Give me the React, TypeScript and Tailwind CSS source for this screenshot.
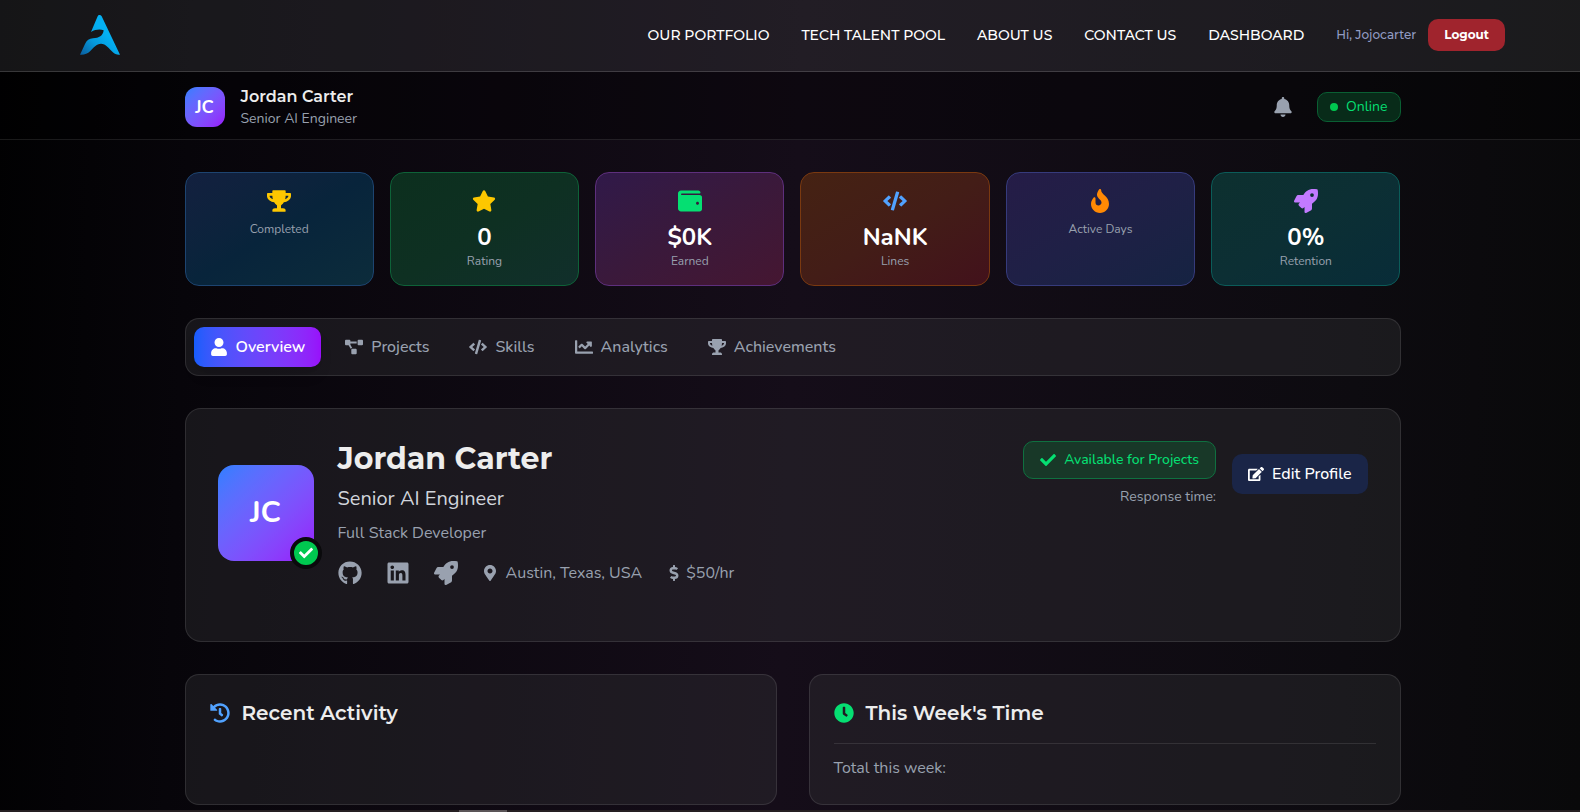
import type { ReactNode } from "react";
import type { IconType } from "react-icons";
import {
  FaBell,
  FaChartLine,
  FaCheck,
  FaClock,
  FaCode,
  FaDollarSign,
  FaEdit,
  FaFire,
  FaGithub,
  FaHistory,
  FaLinkedin,
  FaMapMarkerAlt,
  FaProjectDiagram,
  FaRocket,
  FaStar,
  FaTrophy,
  FaUser,
  FaWallet,
} from "react-icons/fa";

const heading = "font-[Montserrat,Inter,sans-serif]";

const navLinks = ["OUR PORTFOLIO", "TECH TALENT POOL", "ABOUT US", "CONTACT US", "DASHBOARD"];

type Stat = { label: string; value?: string; icon: IconType; color: string; box: string };

const stats: Stat[] = [
  { label: "Completed", icon: FaTrophy, color: "text-[#fdc700]", box: "from-[#13203f] via-[#08243b] to-[#0c2c3b] border-[#1d4470]" },
  { label: "Rating", value: "0", icon: FaStar, color: "text-[#fdc700]", box: "from-[#0c2f1e] via-[#0e3022] to-[#112f2b] border-[#0e6238]" },
  { label: "Earned", value: "$0K", icon: FaWallet, color: "text-[#05df72]", box: "from-[#301949] via-[#3a193b] to-[#451631] border-[#5e2f7d]" },
  { label: "Lines", value: "NaNK", icon: FaCode, color: "text-[#51a2ff]", box: "from-[#452213] via-[#431d17] to-[#42111b] border-[#7a3910]" },
  { label: "Active Days", icon: FaFire, color: "text-[#ff8904]", box: "from-[#251c47] via-[#1f2046] to-[#152342] border-[#363b7c]" },
  { label: "Retention", value: "0%", icon: FaRocket, color: "text-[#c27aff]", box: "from-[#0d302f] via-[#0c2f34] to-[#082c38] border-[#0b5c59]" },
];

type Tab = { label: string; icon: IconType };

const tabs: Tab[] = [
  { label: "Overview", icon: FaUser },
  { label: "Projects", icon: FaProjectDiagram },
  { label: "Skills", icon: FaCode },
  { label: "Analytics", icon: FaChartLine },
  { label: "Achievements", icon: FaTrophy },
];

function Logo() {
  return (
    <svg viewBox="0 0 120 120" className="size-10" role="img" aria-label="Home">
      <defs>
        <linearGradient id="logo-fill" x1="0" y1="1" x2="0.6" y2="0.4">
          <stop offset="0" stopColor="#0a5c9c" />
          <stop offset="0.55" stopColor="#0599dc" />
          <stop offset="1" stopColor="#04b0f2" />
        </linearGradient>
      </defs>
      <path
        fill="url(#logo-fill)"
        d="M53 4C55-1 62-1 65 4L120 119C111 120 104 117 98 111C88 101 77 86 63 86C49 86 41 98 31 108C22 117 12 120 0 119L15 87C20 76 28 71 39 70C57 69 69 63 71 46C61 42 46 43 33 51Z"
      />
    </svg>
  );
}

function Panel({ className, children }: { className: string; children?: ReactNode }) {
  return <section className={`border border-white/10 bg-[#37363a]/35 ${className}`}>{children}</section>;
}

export default function App() {
  return (
    <div className="min-h-[100vh] overflow-hidden bg-[linear-gradient(92deg,#010102_0%,#07050a_12%,#150d19_50%,#0d0b10_85%,#09090a_100%)] font-[Nunito,Lato,sans-serif] text-white">
      <header className="flex h-[72px] items-center justify-between border-b border-white/15 bg-[#37363a]/38 pr-[75px] pb-px pl-20">
        <a href="#home">
          <Logo />
        </a>
        <div className={`flex items-center gap-8 ${heading}`}>
          <nav className="flex gap-8 text-sm font-medium">
            {navLinks.map((label) => (
              <a key={label} href="#nav">
                {label}
              </a>
            ))}
          </nav>
          <div className="flex items-center gap-3 text-xs">
            <span className="font-medium text-[#929bc4]">Hi, Jojocarter</span>
            <button className="h-8 rounded-[10px] bg-[#a0242d] px-4 font-bold">Logout</button>
          </div>
        </div>
      </header>

      <div className="h-[68px] border-b border-white/10 bg-black/35 pl-[5px]">
        <div className="mx-auto flex h-full max-w-[1216px] items-center justify-between pt-[3px]">
          <div className="flex items-center gap-4">
            <div className="flex size-10 items-center justify-center rounded-xl bg-linear-to-br from-[#2b7fff] to-[#9810fa] text-lg font-bold">
              JC
            </div>
            <div>
              <p className={`text-base font-semibold text-[#ededed] ${heading}`}>Jordan Carter</p>
              <p className="text-sm text-[#99a1af]">Senior AI Engineer</p>
            </div>
          </div>
          <div className="flex items-center gap-6">
            <button aria-label="Notifications" className="text-[#99a1af]">
              <FaBell size={20} />
            </button>
            <div className="flex h-[30px] items-center gap-2 rounded-[10px] border border-[#0a5f33] bg-[#082b19] px-3 text-sm text-[#05df72]">
              <span className="size-2 rounded-full bg-[#00c950]" />
              Online
            </div>
          </div>
        </div>
      </div>

      <main className="pt-8 pl-[5px]">
        <div className="mx-auto flex max-w-[1216px] flex-col gap-8">
          <section className="grid grid-cols-6 gap-4">
            {stats.map(({ label, value, icon: Icon, color, box }) => (
              <div key={label} className={`flex flex-col items-center rounded-[14px] border bg-linear-to-br p-4 ${box}`}>
                <Icon size={24} className={`mb-2 ${color}`} />
                {value && <p className="text-2xl font-bold">{value}</p>}
                <p className="text-xs text-[#99a1af]">{label}</p>
              </div>
            ))}
          </section>

          <nav className="flex gap-2 rounded-[14px] border border-white/10 bg-[#37363a]/35 p-2">
            {tabs.map(({ label, icon: Icon }, i) => (
              <button
                key={label}
                className={`flex h-10 items-center gap-2 rounded-[10px] px-4 text-base ${
                  i === 0
                    ? "bg-linear-to-r from-[#155dfc] to-[#9810fa] font-semibold text-white shadow-lg"
                    : "font-medium text-[#99a1af]"
                }`}
              >
                <Icon size={18} className="shrink-0" />
                {label}
              </button>
            ))}
          </nav>

          <Panel className="rounded-2xl p-8">
            <div className="mb-6 flex items-start justify-between">
              <div className="flex items-center gap-6">
                <div className="relative">
                  <div className="flex size-24 items-center justify-center rounded-2xl bg-linear-to-br from-[#2b7fff] to-[#9810fa] text-3xl font-bold">
                    JC
                  </div>
                  <div className="absolute -right-2 -bottom-2 flex size-8 items-center justify-center rounded-full border-4 border-[#0a0a0c] bg-[#00c950]">
                    <FaCheck size={14} />
                  </div>
                </div>
                <div>
                  <h1 className={`mb-2 text-3xl font-bold text-[#ededed] ${heading}`}>Jordan Carter</h1>
                  <p className="mb-2 text-xl text-[#d1d5dc]">Senior AI Engineer</p>
                  <p className="mb-4 text-base text-[#99a1af]">Full Stack Developer</p>
                  <div className="flex items-center gap-6 text-base text-[#99a1af]">
                    <a href="#github" aria-label="GitHub">
                      <FaGithub size={24} />
                    </a>
                    <a href="#linkedin" aria-label="LinkedIn">
                      <FaLinkedin size={24} />
                    </a>
                    <a href="#website" aria-label="Website">
                      <FaRocket size={24} />
                    </a>
                    <span className="flex items-center gap-2">
                      <FaMapMarkerAlt size={16} />
                      Austin, Texas, USA
                    </span>
                    <span className="flex items-center gap-1">
                      <FaDollarSign size={16} />
                      $50/hr
                    </span>
                  </div>
                </div>
              </div>
              <div className="flex items-center gap-4">
                <div className="text-right text-sm">
                  <div className="mb-2 flex items-center gap-2 rounded-[10px] border border-[#0f7040] bg-[#183828] px-4 py-2 font-medium text-[#05df72]">
                    <FaCheck size={16} />
                    Available for Projects
                  </div>
                  <p className="text-[#99a1af]">Response time:</p>
                </div>
                <button className="flex h-10 items-center gap-2 rounded-[10px] bg-[#1a2547] px-4 text-base font-medium">
                  <FaEdit size={16} />
                  Edit Profile
                </button>
              </div>
            </div>
          </Panel>

          <div className="grid grid-cols-2 gap-8">
            <Panel className="rounded-[14px] p-6">
              <h2 className={`flex items-center gap-3 text-xl font-semibold text-[#ededed] ${heading}`}>
                <FaHistory size={20} className="text-[#51a2ff]" />
                Recent Activity
              </h2>
            </Panel>
            <Panel className="rounded-[14px] p-6">
              <h2 className={`mb-4 flex items-center gap-3 text-xl font-semibold text-[#ededed] ${heading}`}>
                <FaClock size={20} className="text-[#05df72]" />
                This Week&apos;s Time
              </h2>
              <p className="border-t border-white/10 pt-3 text-base text-[#99a1af]">Total this week:</p>
            </Panel>
          </div>
        </div>
      </main>

      <div className="mt-[5px] h-0.5 bg-[#251f22] pl-[459px]">
        <div className="h-full w-12 bg-[#5b5558]" />
      </div>
    </div>
  );
}
